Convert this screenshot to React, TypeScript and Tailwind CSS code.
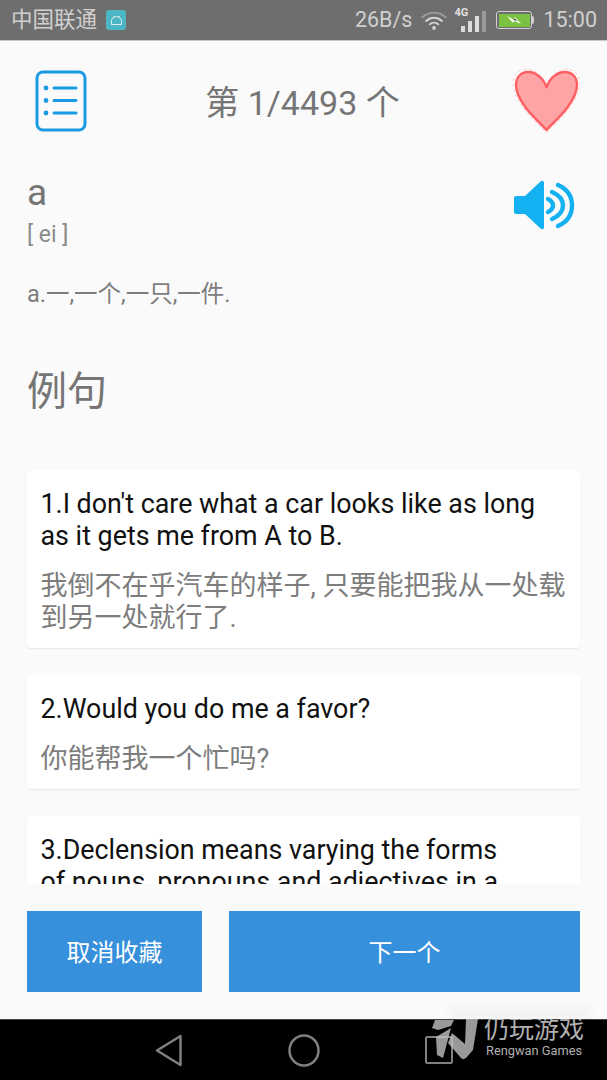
const FONT = "font-['Roboto','Noto_Sans_CJK_SC',sans-serif]";

function ListIcon() {
  return (
    <svg width="52" height="62" viewBox="0 0 52 62" fill="none" stroke="#1b9ae4" strokeLinecap="round">
      <rect x="2" y="2" width="48" height="58" rx="6" strokeWidth="3" />
      <path d="M19 18H41M19 30.5H41M19 43H41" strokeWidth="3" />
      <circle cx="11" cy="18" r="2.4" fill="#1b9ae4" stroke="none" />
      <circle cx="11" cy="30.5" r="2.4" fill="#1b9ae4" stroke="none" />
      <circle cx="11" cy="43" r="2.4" fill="#1b9ae4" stroke="none" />
    </svg>
  );
}

const HEART = "M34.5 20C31 11 24 5 16 5C9 5 4 10 4 18C4 26 8 33 14 41C20 49 28 56 34.5 63C41 56 49 49 55 41C61 33 65 26 65 18C65 10 60 5 53 5C45 5 38 11 34.5 20Z";

function Heart() {
  return (
    <svg width="68" height="68" viewBox="0 0 68 68" fill="none">
      <path d={HEART} transform="translate(34.5 34) scale(1.09) translate(-34.5 -34)" fill="#fff" stroke="#ffd0d2" strokeWidth="1" strokeDasharray="3 2" />
      <path d={HEART} fill="#ffa4a6" stroke="#fb5f62" strokeWidth="2.4" strokeLinejoin="round" />
    </svg>
  );
}

function Speaker() {
  return (
    <svg width="62" height="54" viewBox="0 0 62 54" fill="none">
      <path d="M2 18H11L26 4C28 2 30 2.500 30 5V49C30 51.500 28 52 26 50L11 36H2C1 36 0 35 0 34V20C0 19 1 18 2 18Z" fill="#14b1f2" />
      <g stroke="#14b1f2" strokeWidth="4.400" strokeLinecap="round">
        <path d="M34 21C37 22.500 39 24.500 39 27.500C39 30.500 37 32.500 34 34" />
        <path d="M38 14C45 17 49 21.500 49 27.500C49 33.500 45 38 38 41" />
        <path d="M44 7C53 11 58 18 58 27.500C58 37 53 44 44 48" />
      </g>
    </svg>
  );
}

function StatusBar() {
  return (
    <div className="h-[41px] bg-[#6f6e6e] border-b border-[#c9c9c9] flex items-center justify-between pl-[11px] pr-[10px] text-[#d0d0d0] shrink-0">
      <div className="flex items-center gap-[9px]">
        <span className="text-[21.500px] leading-none">中国联通</span>
        <span className="w-[20px] h-[20px] rounded-[3px] bg-[#4db6c4] flex items-center justify-center">
          <svg width="13" height="11" viewBox="0 0 13 11" fill="none" stroke="#d8eef0" strokeWidth="1">
            <path d="M1.500 9.500V6C1.500 3.500 3.800 1.500 6.500 1.500C9.200 1.500 11.500 3.500 11.500 6V9.500Z" />
            <path d="M3.500 1L4.500 2.500M9.500 1L8.500 2.500" />
          </svg>
        </span>
      </div>
      <div className="flex items-center">
        <span className="text-[21.500px] leading-none">26B/s</span>
        <svg className="ml-[9px]" width="26" height="22" viewBox="0 0 28 22" fill="none" strokeLinecap="round">
          <path d="M1.500 8C8.500 1.500 19.500 1.500 26.500 8" stroke="#9a9a9a" strokeWidth="2.200" />
          <path d="M5.500 12C10.500 7.500 17.500 7.500 22.500 12" stroke="#d4d4d4" strokeWidth="2.200" />
          <path d="M9.500 15.500C12 13.500 16 13.500 18.500 15.500" stroke="#d4d4d4" strokeWidth="2.200" />
          <circle cx="14" cy="19.500" r="2" fill="#d4d4d4" />
        </svg>
        <div className="relative w-[32px] h-[24px] ml-[7px]">
          <span className="absolute left-0 top-[-1px] text-[11px] font-bold leading-none text-[#e0e0e0]">4G</span>
          <div className="absolute left-[7px] bottom-0 flex items-end gap-[3px]">
            <span className="w-[4px] h-[6px] bg-[#dcdcdc]" />
            <span className="w-[4px] h-[11px] bg-[#dcdcdc]" />
            <span className="w-[4px] h-[16px] bg-[#dcdcdc]" />
            <span className="w-[4px] h-[21px] bg-[#999]" />
          </div>
        </div>
        <div className="ml-[10px] flex items-center">
          <div className="w-[36px] h-[18px] border-[1.500px] border-[#d0d0d0] rounded-[3px] p-[1.500px]">
            <div className="w-full h-full bg-[#7cc242] flex items-center justify-center">
              <svg width="16" height="10" viewBox="0 0 16 10"><path d="M1 1L8 4.500L9 2L15 9L8 6L7 8Z" fill="#f4f8e8" /><path d="M5 3L8 4.500L9 3.500L11 6L8 5Z" fill="#2d3a1e" /></svg>
            </div>
          </div>
          <span className="w-[2px] h-[8px] bg-[#d0d0d0] rounded-r-sm" />
        </div>
        <span className="text-[21.500px] leading-none ml-[9px]">15:00</span>
      </div>
    </div>
  );
}

function Card({ en, zh }: { en: string[]; zh: string[] }) {
  return (
    <div className="bg-white rounded-[4px] shadow-[0_1px_1px_rgba(0,0,0,0.08)] px-[13.500px] pt-[18px] pb-[14px]">
      <div className="text-[26.850px] leading-[32px] text-[#111]">
        {en.map((l) => <div key={l} className="whitespace-nowrap">{l}</div>)}
      </div>
      {zh.length > 0 && (
        <div className="mt-[18px] text-[27px] leading-[32px] text-[#7d7d7d]">
          {zh.map((l) => <div key={l} className="whitespace-nowrap">{l}</div>)}
        </div>
      )}
    </div>
  );
}

export default function App() {
  return (
    <div className={`${FONT} w-[607px] h-[1080px] overflow-hidden flex flex-col bg-[#fafafa] relative`}>
      <StatusBar />
      <div className="flex-1 flex flex-col min-h-0">
        <div className="flex-1 min-h-0 overflow-hidden px-[27px]">
          <div className="relative flex items-center justify-center h-[62px] mt-[29px]">
            <div className="absolute left-[8px] top-0"><ListIcon /></div>
            <span className="pt-[3px] pr-[2px] text-[34px] leading-none text-[#757575]">第 1/4493 个</span>
            <div className="absolute right-0 top-[-3px]"><Heart /></div>
          </div>
          <div className="relative mt-[38px]">
            <div className="text-[37px] leading-[46px] text-[#757575]">a</div>
            <div className="mt-[6px] text-[23px] leading-[26px] text-[#8a8a8a]">[ ei ]</div>
            <div className="absolute right-[4px] top-[8px]"><Speaker /></div>
          </div>
          <div className="mt-[31px] text-[23.500px] leading-[30px] text-[#7d7d7d]">a.一,一个,一只,一件.</div>
          <div className="mt-[58px] text-[40px] leading-[50px] text-[#757575]">例句</div>
          <div className="mt-[53px] flex flex-col gap-[27px]">
            <Card
              en={["1.I don't care what a car looks like as long", "as it gets me from A to B."]}
              zh={["我倒不在乎汽车的样子, 只要能把我从一处载", "到另一处就行了."]}
            />
            <Card en={["2.Would you do me a favor?"]} zh={["你能帮我一个忙吗?"]} />
            <Card en={["3.Declension means varying the forms", "of nouns, pronouns and adjectives in a"]} zh={[]} />
          </div>
        </div>
        <div className="shrink-0 flex gap-[27px] p-[27px] bg-[#fafafa] text-white text-[24px]">
          <button className="w-[175px] h-[81px] pt-[2px] bg-[#3790db] flex items-center justify-center">取消收藏</button>
          <button className="flex-1 h-[81px] pt-[2px] bg-[#3790db] flex items-center justify-center">下一个</button>
        </div>
      </div>
      <div className="absolute left-[450px] top-[1009px] w-[140px] h-[10px] bg-[#f1f1f1] blur-[4px]" />
      <div className="relative shrink-0 h-[61px] bg-black border-t border-[#444] flex items-center pl-[155px]">
        <svg width="28" height="33" viewBox="0 0 28 33" fill="none" stroke="#808080" strokeWidth="2.500" strokeLinejoin="round"><path d="M25.500 2V31L2 16.500Z" /></svg>
        <svg className="ml-[105px]" width="32" height="33" viewBox="0 0 32 33" fill="none" stroke="#808080" strokeWidth="2.500"><ellipse cx="16" cy="16.500" rx="14.500" ry="15" /></svg>
        <div className="ml-[105px] w-[28px] h-[28px] border-[2.500px] border-[#808080] rounded-[2px]" />
      </div>
      <div className="absolute left-[432px] top-[1019px] w-[152px] h-[42px] text-[#b0b0b0] pointer-events-none overflow-hidden">
        <svg className="absolute left-0 top-0" width="48" height="42" viewBox="0 0 48 42" fill="#c4c4c4" opacity="0.78">
          <path d="M0 9L3 1H22L19 7L6 11Z" />
          <path d="M34 0H46L41 31L34 39C32 40.500 30 40.500 29 39L16 24L20 14L33 25Z" />
          <path d="M4 18L19 9L11 39L5 36Z" />
        </svg>
        <div className="absolute left-[52px] top-[-5px] text-[25px] leading-[32px] whitespace-nowrap">仍玩游戏</div>
        <div className="absolute left-[54px] top-[24px] text-[12.800px] leading-[16px] whitespace-nowrap">Rengwan Games</div>
      </div>
    </div>
  );
}
